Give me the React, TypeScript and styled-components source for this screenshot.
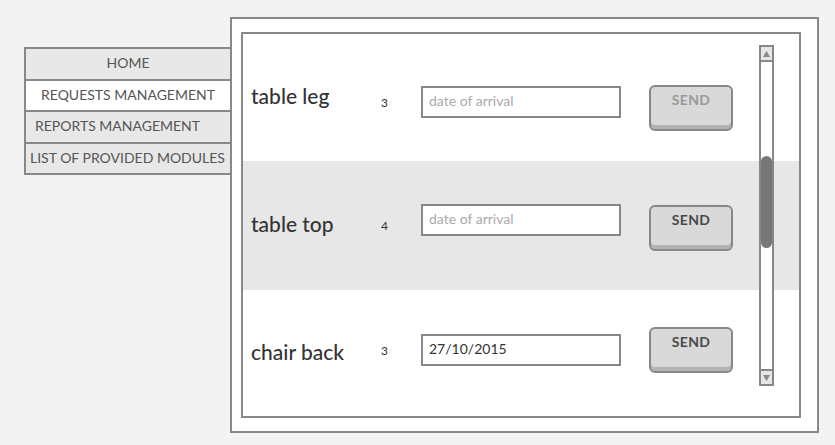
import React from "react";
import styled, { createGlobalStyle } from "styled-components";

const GlobalStyle = createGlobalStyle`
  html, body {
    margin: 0;
    padding: 0;
    background: #f3f3f3;
  }
  body {
    font-family: Lato, "Open Sans", sans-serif;
    color: #333;
  }
`;

const Page = styled.div`
  display: flex;
  align-items: flex-start;
  padding: 17px 0 0 24px;
  width: 835px;
  height: 445px;
  box-sizing: border-box;
`;

const Menu = styled.nav`
  margin-top: 30px;
  width: 206px;
  display: flex;
  flex-direction: column;
  border: 2px solid #888;
  border-right: none;
  box-sizing: border-box;
`;

const MenuItem = styled.div<{ $active?: boolean; $align: "center" | "left"; $pad: number }>`
  height: 29.5px;
  display: flex;
  align-items: center;
  justify-content: ${(p) => (p.$align === "center" ? "center" : "flex-start")};
  padding-left: ${(p) => p.$pad}px;
  padding-bottom: 2px;
  box-sizing: border-box;
  height: 31.5px;
  background: ${(p) => (p.$active ? "#ffffff" : "#e8e8e8")};
  border-bottom: 2px solid #888;
  font-size: 14px;
  color: #555;
  text-transform: uppercase;
  white-space: nowrap;
  &:last-child {
    border-bottom: none;
    height: 29.5px;
  }
`;

const Panel = styled.section`
  width: 589px;
  height: 416px;
  box-sizing: border-box;
  border: 2px solid #888;
  background: #fff;
  padding: 13px 16px 13px 9px;
`;

const ListBox = styled.div`
  position: relative;
  height: 386px;
  box-sizing: border-box;
  border: 2px solid #888;
  display: flex;
  flex-direction: column;
`;

const Row = styled.div<{ $shaded?: boolean; $h: number }>`
  height: ${(p) => p.$h}px;
  flex: none;
  display: grid;
  grid-template-columns: 130px 40px 228px 84px;
  align-items: start;
  padding-left: 8px;
  background: ${(p) => (p.$shaded ? "#e7e7e7" : "transparent")};
`;

const Label = styled.div`
  align-self: center;
  margin-bottom: 4px;
  font-size: 21px;
  font-weight: 500;
  color: #333;
  white-space: nowrap;
`;

const Qty = styled.div<{ $top: number }>`
  margin-top: ${(p) => p.$top}px;
  font-size: 12px;
  color: #333;
`;

const DateInput = styled.input<{ $top: number }>`
  margin-top: ${(p) => p.$top}px;
  width: 200px;
  height: 32px;
  box-sizing: border-box;
  border: 2px solid #888;
  background: #fff;
  padding: 0 6px 3px;
  font-family: Lato, "Open Sans", sans-serif;
  font-size: 14px;
  color: #333;
  outline: none;
  &::placeholder {
    color: #aaa;
  }
`;

const SendButton = styled.button<{ $top: number; $disabled?: boolean }>`
  margin-top: ${(p) => p.$top}px;
  width: 84px;
  height: 46px;
  box-sizing: border-box;
  border: 2px solid #888;
  border-radius: 6px;
  background: #d9d9d9;
  box-shadow: inset 0 -4px 0 #b3b3b3;
  padding: 4px 0 0;
  display: flex;
  justify-content: center;
  align-items: flex-start;
  font-family: Lato, "Open Sans", sans-serif;
  font-weight: 700;
  font-size: 14px;
  letter-spacing: 0.3px;
  color: ${(p) => (p.$disabled ? "#9a9a9a" : "#4a4a4a")};
  cursor: pointer;
`;

const ScrollBar = styled.div`
  position: absolute;
  top: 11px;
  right: 25px;
  width: 15px;
  height: 341px;
  box-sizing: border-box;
  border: 2px solid #888;
  background: #fff;
  display: flex;
  flex-direction: column;
`;

const ArrowBox = styled.div<{ $pos: "top" | "bottom" }>`
  height: 13px;
  flex: none;
  background: #e6e6e6;
  border-${(p) => (p.$pos === "top" ? "bottom" : "top")}: 2px solid #888;
  display: flex;
  align-items: center;
  justify-content: center;
`;

const Track = styled.div`
  flex: 1;
  position: relative;
`;

const Thumb = styled.div`
  position: absolute;
  top: 94px;
  left: 0;
  right: 0;
  height: 92px;
  background: #777;
  border-radius: 6px;
`;

const Arrow = ({ down }: { down?: boolean }) => (
  <svg width="7" height="6" viewBox="0 0 7 6">
    <polygon points={down ? "0,0 7,0 3.5,6" : "3.5,0 7,6 0,6"} fill="#888" />
  </svg>
);

const menu = [
  { label: "HOME", align: "center" as const, pad: 0 },
  { label: "REQUESTS MANAGEMENT", align: "center" as const, pad: 0, active: true },
  { label: "REPORTS MANAGEMENT", align: "left" as const, pad: 9 },
  { label: "LIST OF PROVIDED MODULES", align: "left" as const, pad: 4 },
];

const rows = [
  { name: "table leg", qty: "3", h: 127, qtyTop: 61, inputTop: 52, btnTop: 51, value: "", disabled: true },
  { name: "table top", qty: "4", h: 129, qtyTop: 57, inputTop: 43, btnTop: 44, value: "", shaded: true },
  { name: "chair back", qty: "3", h: 126, qtyTop: 53, inputTop: 44, btnTop: 37, value: "27/10/2015" },
];

export default function App() {
  return (
    <>
      <GlobalStyle />
      <Page>
        <Menu>
          {menu.map((m) => (
            <MenuItem key={m.label} $active={m.active} $align={m.align} $pad={m.pad}>
              {m.label}
            </MenuItem>
          ))}
        </Menu>
        <Panel>
          <ListBox>
            {rows.map((r) => (
              <Row key={r.name} $h={r.h} $shaded={r.shaded}>
                <Label>{r.name}</Label>
                <Qty $top={r.qtyTop}>{r.qty}</Qty>
                <DateInput
                  $top={r.inputTop}
                  placeholder="date of arrival"
                  defaultValue={r.value}
                />
                <SendButton $top={r.btnTop} $disabled={r.disabled}>
                  SEND
                </SendButton>
              </Row>
            ))}
            <ScrollBar>
              <ArrowBox $pos="top">
                <Arrow />
              </ArrowBox>
              <Track>
                <Thumb />
              </Track>
              <ArrowBox $pos="bottom">
                <Arrow down />
              </ArrowBox>
            </ScrollBar>
          </ListBox>
        </Panel>
      </Page>
    </>
  );
}
